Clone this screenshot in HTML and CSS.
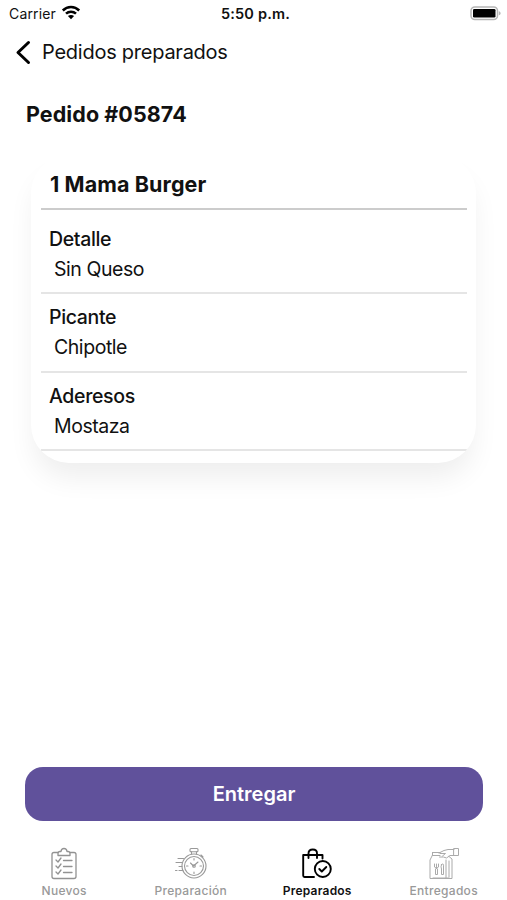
FILE: index.html
```html
<!DOCTYPE html>
<html lang="es">
<head>
<meta charset="utf-8">
<meta name="viewport" content="width=device-width, initial-scale=1">
<title>Pedidos preparados</title>
<link rel="stylesheet" href="styles.css">
</head>
<body>
<div class="screen">
  <div class="status">
    <div class="carrier"><span class="carrier-name">Carrier</span>
      <svg class="wifi" width="20" height="15" viewBox="0 0 20 15"><g fill="none" stroke="#000" stroke-width="2.500"><path d="M1.800 5.500C6.400.9 13.600.9 18.200 5.500"/><path d="M5 8.700C7.800 6 12.200 6 15 8.700"/></g><path d="M10 14.200 6.900 11.100C8.700 9.500 11.300 9.500 13.100 11.100Z"/></svg>
    </div>
    <span class="time">5:50 p.m.</span>
    <svg class="battery" width="32" height="15" viewBox="0 0 32 15"><rect x="1" y="1" width="26.500" height="12.500" rx="3.800" fill="#fff" stroke="#b5b5b5" stroke-width="1.500"/><rect x="3" y="3" width="22.500" height="8.500" rx="1.300"/><path d="M28.800 5.200C31.200 6 31.200 8.500 28.800 9.300Z" fill="#b5b5b5"/></svg>
  </div>
  <header class="header">
    <svg class="back" width="16" height="26" viewBox="0 0 16 26"><path d="M13.500 2.500 3 12.500 13.500 22.500" fill="none" stroke="#000" stroke-width="3" stroke-linecap="round" stroke-linejoin="round"/></svg>
    <span class="header-title">Pedidos preparados</span>
  </header>
  <h1 class="order"><span>Pedido #05874</span></h1>
  <section class="card">
    <h2 class="product"><span>1 Mama Burger</span></h2>
    <div class="option first"><span class="label">Detalle</span><span class="value">Sin Queso</span></div>
    <div class="option"><span class="label">Picante</span><span class="value">Chipotle</span></div>
    <div class="option"><span class="label">Aderesos</span><span class="value">Mostaza</span></div>
  </section>
  <button class="deliver">Entregar</button>
  <nav class="tabs">
    <div class="tab">
      <svg width="34" height="34" viewBox="0 0 34 34" fill="none" stroke="#929292" stroke-width="1.300" stroke-linecap="round" stroke-linejoin="round"><path d="M11 5.500H7Q5 5.500 5 7.500V29.500Q5 31.500 7 31.500H27Q29 31.500 29 29.500V7.500Q29 5.500 27 5.500H23"/><path d="M11 8.500V6.500Q11 4.500 13 4.500H14Q14.300 1.500 17 1.500T20 4.500H21Q23 4.500 23 6.500V8.500Z"/><path d="m9 13 2 2 3-4M9 19l2 2 3-4M9 25l2 2 3-4M16.500 13.500H25M16.500 19.500H25M16.500 25.500H25"/></svg>
      <span class="tab-name nuevos">Nuevos</span>
    </div>
    <div class="tab">
      <svg width="34" height="34" viewBox="0 0 34 34" fill="none" stroke="#999" stroke-width="1.100" stroke-linecap="round" stroke-linejoin="round"><circle cx="20" cy="19" r="12"/><circle cx="20" cy="19" r="9.500"/><rect x="16" y="1.500" width="8" height="3.200" rx="1"/><path d="M17.500 4.700V7M22.500 4.700V7M27 8l2 2M16.500 16l3 3 4.500-4M20 11.500V13M20 25v1.500M12.500 19H14M26 19h1.500M4 11.500H9.500M2 15.500H8M5 19.500H8M1.500 23.500H3M5 23.500H9"/><circle cx="20" cy="19" r="1.300"/></svg>
      <span class="tab-name preparacion">Preparación</span>
    </div>
    <div class="tab active">
      <svg width="34" height="34" viewBox="0 0 34 34" fill="none" stroke="#000" stroke-width="1.900" stroke-linecap="round" stroke-linejoin="round"><path d="M14 30H4.500Q3.200 30 3.200 28.500V8H22.500V11.500"/><path d="M8.500 11V6.500Q8.500 2.500 12.800 2.500T17 6.500V11"/><circle cx="22.800" cy="22" r="8"/><path d="m19.300 22 2.500 2.500 4.500-4.500"/></svg>
      <span class="tab-name preparados">Preparados</span>
    </div>
    <div class="tab">
      <svg width="34" height="34" viewBox="0 0 34 34" fill="none" stroke="#aaa" stroke-width="1" stroke-linecap="round" stroke-linejoin="round"><path d="M5.500 5.500H13M5.500 5.500V8L3 13V31.500H25V12L22 9.500M5.500 8.500H13M19 13V31.500M22 14V30M6 31H22"/><path d="M12.500 10H16.500L19.500 11 23 8.500H27M12 6 17 3.500 21 2.500H27M13 6.500H18.500L15.500 9"/><path d="M27 1.500H31.500V8.500H27Z"/><path d="M7.500 17V20Q9.500 22.500 11.500 20V17M9.500 17V21.500M8.500 22V27.500H10.500V22M14.500 17.500Q17 15.500 16.500 20V27.500H14.500V22Q13.500 20 14.500 17.500Z"/></svg>
      <span class="tab-name entregados">Entregados</span>
    </div>
  </nav>
</div>
</body>
</html>
```
FILE: styles.css
```css
* { box-sizing: border-box; }
body { margin: 0; background: #fff; color: #111; font-family: Inter, "Liberation Sans", sans-serif; }
.screen { width: 507px; height: 900px; display: flex; flex-direction: column; overflow: hidden; }
.status { height: 28px; padding: 0 5px 0 9px; display: grid; grid-template-columns: 1fr auto 1fr; align-items: center; font-size: 14px; }
.carrier { display: flex; align-items: center; gap: 5px; }
.carrier-name { letter-spacing: .15px; margin-top: -1px; }
.wifi { margin-top: -3px; }
.time { font-weight: 600; font-size: 14.5px; letter-spacing: .2px; margin-top: -1px; }
.battery { justify-self: end; margin-top: -2px; }
.header { height: 49px; padding-left: 15px; display: flex; align-items: center; gap: 11px; font-size: 20px; letter-spacing: -.25px; }
.header-title { margin-top: -1px; }
.order { margin: 0; height: 77px; padding: 0 26px 3px; display: flex; align-items: center; font-size: 21.5px; font-weight: 700; letter-spacing: .08px; }
.card { margin: 1px 31px 0; height: 308px; padding: 0 9px 0 10px; border-radius: 38px; overflow: hidden; background: #fff; box-shadow: 0 18px 28px -4px rgba(0,0,0,.07); }
.product { margin: 0; height: 55px; padding: 4px 9px 0; display: flex; align-items: center; font-size: 21.5px; font-weight: 700; letter-spacing: .1px; border-bottom: 2px solid #ccc; }
.option { height: 78.5px; padding: 8px 8px 0; display: flex; flex-direction: column; border-bottom: 2px solid #e5e5e5; font-size: 19.5px; line-height: 30px; letter-spacing: -.45px; }
.option.first { height: 84px; padding-top: 14px; }
.label { font-weight: 500; letter-spacing: -.35px; }
.value { padding-left: 5px; }
.label, .value { align-self: flex-start; }
.deliver { margin: 304px 24px 0 25px; height: 54px; border: 0; border-radius: 18px; background: #60519b; color: #fff; font: 600 20px Inter, sans-serif; }
.tabs { height: 79px; display: grid; grid-template-columns: repeat(4, 1fr); padding: 26px 0 0 1px; }
.tab { display: flex; flex-direction: column; align-items: center; gap: 2px; font-size: 12px; font-weight: 500; color: #999; }
.tab svg { flex: none; }
.tab-name { line-height: 16px; letter-spacing: .3px; }
.active { color: #111; font-weight: 600; }
.preparados { letter-spacing: .2px; }
```
